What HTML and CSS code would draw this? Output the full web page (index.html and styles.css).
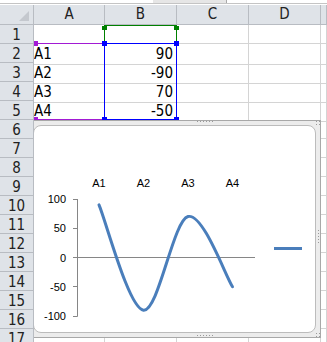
FILE: index.html
```html
<!DOCTYPE html>
<html>
<head>
    <link rel="stylesheet" href="styles.css">
</head>
<body>
    <div class="topbar"><div class="fx-scroll"></div></div>

    <div class="sheet">
        <div class="corner"><span class="corner-tri"></span></div>

        <div class="col-heads">
            <div class="ch">A</div>
            <div class="ch">B</div>
            <div class="ch">C</div>
            <div class="ch">D</div>
            <div class="ch"></div>
        </div>

        <div class="row-heads">
            <div class="rh">1</div>
            <div class="rh">2</div>
            <div class="rh">3</div>
            <div class="rh">4</div>
            <div class="rh">5</div>
            <div class="rh">6</div>
            <div class="rh">7</div>
            <div class="rh">8</div>
            <div class="rh">9</div>
            <div class="rh">10</div>
            <div class="rh">11</div>
            <div class="rh">12</div>
            <div class="rh">13</div>
            <div class="rh">14</div>
            <div class="rh">15</div>
            <div class="rh">16</div>
            <div class="rh">17</div>
        </div>

        <div class="cells">
            <div class="row"><div class="c"></div><div class="c"></div><div class="c"></div><div class="c"></div><div class="c"></div></div>
            <div class="row"><div class="c">A1</div><div class="c num">90</div><div class="c"></div><div class="c"></div><div class="c"></div></div>
            <div class="row"><div class="c">A2</div><div class="c num">-90</div><div class="c"></div><div class="c"></div><div class="c"></div></div>
            <div class="row"><div class="c">A3</div><div class="c num">70</div><div class="c"></div><div class="c"></div><div class="c"></div></div>
            <div class="row"><div class="c">A4</div><div class="c num">-50</div><div class="c"></div><div class="c"></div><div class="c"></div></div>
            <div class="row"><div class="c"></div><div class="c"></div><div class="c"></div><div class="c"></div><div class="c"></div></div>
            <div class="row"><div class="c"></div><div class="c"></div><div class="c"></div><div class="c"></div><div class="c"></div></div>
            <div class="row"><div class="c"></div><div class="c"></div><div class="c"></div><div class="c"></div><div class="c"></div></div>
            <div class="row"><div class="c"></div><div class="c"></div><div class="c"></div><div class="c"></div><div class="c"></div></div>
            <div class="row"><div class="c"></div><div class="c"></div><div class="c"></div><div class="c"></div><div class="c"></div></div>
            <div class="row"><div class="c"></div><div class="c"></div><div class="c"></div><div class="c"></div><div class="c"></div></div>
            <div class="row"><div class="c"></div><div class="c"></div><div class="c"></div><div class="c"></div><div class="c"></div></div>
            <div class="row"><div class="c"></div><div class="c"></div><div class="c"></div><div class="c"></div><div class="c"></div></div>
            <div class="row"><div class="c"></div><div class="c"></div><div class="c"></div><div class="c"></div><div class="c"></div></div>
            <div class="row"><div class="c"></div><div class="c"></div><div class="c"></div><div class="c"></div><div class="c"></div></div>
            <div class="row"><div class="c"></div><div class="c"></div><div class="c"></div><div class="c"></div><div class="c"></div></div>
            <div class="row"><div class="c"></div><div class="c"></div><div class="c"></div><div class="c"></div><div class="c"></div></div>

            <!-- source ranges of the selected chart -->
            <div class="range range-cat">
                <span class="knob k-tl"></span><span class="knob k-tr"></span>
                <span class="knob k-bl"></span><span class="knob k-br"></span>
            </div>
            <div class="range range-name">
                <span class="knob k-tl"></span><span class="knob k-tr"></span>
            </div>
            <div class="range range-val">
                <span class="knob k-tl"></span><span class="knob k-tr"></span>
                <span class="knob k-bl"></span><span class="knob k-br"></span>
            </div>

            <div class="chart">
                <span class="grip grip-top"></span>
                <span class="grip grip-bottom"></span>
                <span class="grip grip-right"></span>
                <span class="grip grip-tr"></span>
                <span class="grip grip-br"></span>
                <div class="chart-area">
                    <svg class="plot" width="282" height="206" viewBox="0 0 282 206">
                        <g transform="translate(-1 -1)">
                            <g class="cat-labels">
                                <text x="66" y="62">A1</text>
                                <text x="110.5" y="62">A2</text>
                                <text x="155" y="62">A3</text>
                                <text x="199.5" y="62">A4</text>
                            </g>
                            <g class="val-labels">
                                <text x="33" y="78">100</text>
                                <text x="33" y="107.2">50</text>
                                <text x="33" y="136.5">0</text>
                                <text x="33" y="165.7">-50</text>
                                <text x="33" y="195">-100</text>
                            </g>
                            <g class="axis">
                                <line x1="44.5" y1="74" x2="44.5" y2="191.5"/>
                                <line x1="40" y1="74.5" x2="44.5" y2="74.5"/>
                                <line x1="40" y1="103.5" x2="44.5" y2="103.5"/>
                                <line x1="40" y1="132.5" x2="222" y2="132.5"/>
                                <line x1="40" y1="161.5" x2="44.5" y2="161.5"/>
                                <line x1="40" y1="191.5" x2="44.5" y2="191.5"/>
                            </g>
                            <path class="series" d="M66 79.85 C73.42 97.4 95.67 183.2 110.5 185.15 C125.33 187.1 140.17 95.45 155 91.55 C169.83 87.65 192.08 150.05 199.5 161.75"/>
                            <line class="legend-key" x1="241" y1="123.5" x2="269" y2="123.5"/>
                        </g>
                    </svg>
                </div>
            </div>
        </div>
    </div>
</body>
</html>
```

FILE: styles.css
```css
body {
    margin: 0;
    width: 327px;
    height: 342px;
    overflow: hidden;
    background: #fff;
    font-family: "Liberation Sans Narrow", "DejaVu Sans Condensed", "Liberation Sans", sans-serif;
    color: #000;
}

.topbar {
    position: relative;
    height: 3px;
    border-bottom: 1px solid #c4c4c4;
    margin-bottom: 1px;
}

.fx-scroll {
    position: absolute;
    left: 153px;
    top: 0;
    width: 73px;
    height: 3px;
    background: #e6e6e6;
    border-right: 1px solid #a9a9a9;
}

.sheet {
    display: grid;
    grid-template-columns: 34px 1fr;
    grid-template-rows: 20px 1fr;
}

.corner {
    position: relative;
    background: #dfe3e8;
    border-right: 1px solid #b8bcc2;
    border-bottom: 1px solid #b8bcc2;
    box-sizing: border-box;
}

.corner-tri {
    position: absolute;
    right: 4px;
    bottom: 3px;
    width: 0;
    height: 0;
    border-left: 10px solid transparent;
    border-bottom: 10px solid #c4c8ce;
}

.col-heads {
    display: grid;
    grid-template-columns: 71px 72px 72px 72px 1fr;
}

.ch {
    background: #dfe3e8;
    border-right: 1px solid #b8bcc2;
    border-bottom: 1px solid #b8bcc2;
    box-sizing: border-box;
    text-align: center;
    font-size: 15px;
    line-height: 19px;
    color: #222;
}

.row-heads {
    display: flex;
    flex-direction: column;
}

.rh {
    height: 19px;
    background: #dfe3e8;
    border-right: 1px solid #b8bcc2;
    border-bottom: 1px solid #b8bcc2;
    box-sizing: border-box;
    text-align: center;
    font-size: 15px;
    line-height: 20px;
    color: #222;
}

.cells {
    position: relative;
    overflow: hidden;
}

.row {
    display: grid;
    grid-template-columns: 71px 72px 72px 72px 1fr;
    height: 19px;
}

.c {
    border-right: 1px solid #d4d4d4;
    border-bottom: 1px solid #d4d4d4;
    box-sizing: border-box;
    font-size: 15px;
    line-height: 20px;
    padding: 0 1px 0 0;
    white-space: nowrap;
}

.num {
    text-align: right;
    padding-right: 3px;
}

/* range highlights */
.range {
    position: absolute;
    box-sizing: border-box;
    border: 1px solid;
}

.range-cat {
    left: -1px;
    top: 18px;
    width: 72px;
    height: 77px;
    border-color: #a21ad4;
}

.range-name {
    left: 70px;
    top: 0;
    width: 73px;
    height: 19px;
    border-color: #008000;
}

.range-val {
    left: 70px;
    top: 18px;
    width: 73px;
    height: 77px;
    border-color: #0000ff;
}

.knob {
    position: absolute;
    width: 5px;
    height: 5px;
}

.range-cat .knob { background: #a21ad4; }
.range-name .knob { background: #008000; width: 5px; height: 4px; }
.range-val .knob { background: #0000ff; }

.k-tl { left: -3px; top: -3px; }
.k-tr { right: -3px; top: -3px; }
.k-bl { left: -3px; bottom: -3px; }
.k-br { right: -3px; bottom: -3px; }

.range-cat .k-tl,
.range-cat .k-bl { left: -1px; }

.range-name .k-tl,
.range-name .k-tr { top: 0; }

/* chart object */
.chart {
    position: absolute;
    left: -6px;
    top: 95px;
    width: 293px;
    height: 218px;
    box-sizing: border-box;
    border: 1px solid #a8a8a8;
    background: #ececec;
    padding: 4px;
}

.chart-area {
    position: relative;
    width: 100%;
    height: 100%;
    box-sizing: border-box;
    background: #fff;
    border: 1px solid #bcbcbc;
    border-radius: 8px;
}

.plot {
    display: block;
}

.grip {
    position: absolute;
    background-image: radial-gradient(circle, #9a9a9a 0.6px, transparent 1px);
    background-size: 3px 3px;
}

.grip-top { left: 167px; top: -1px; width: 17px; height: 4px; }
.grip-bottom { left: 167px; bottom: -1px; width: 17px; height: 4px; }
.grip-right { right: -1px; top: 108px; width: 4px; height: 14px; }
.grip-tr { right: -1px; top: -1px; width: 6px; height: 6px; }
.grip-br { right: -1px; bottom: -1px; width: 6px; height: 6px; }

.cat-labels text,
.val-labels text {
    font-family: "Liberation Sans", Arial, sans-serif;
    font-size: 11px;
    fill: #000;
}

.cat-labels text { text-anchor: middle; }
.val-labels text { text-anchor: end; }

.axis line {
    stroke: #868686;
    stroke-width: 1;
}

.series {
    fill: none;
    stroke: #4a7ebb;
    stroke-width: 3;
    stroke-linecap: round;
}

.legend-key {
    stroke: #4a7ebb;
    stroke-width: 3;
}
```
